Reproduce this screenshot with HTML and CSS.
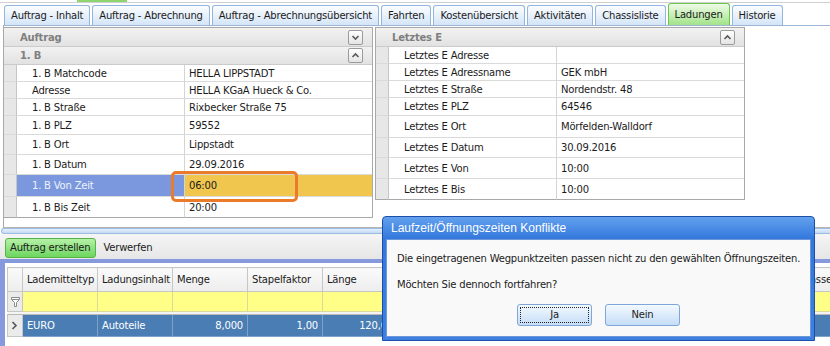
FILE: index.html
```html
<!DOCTYPE html>
<html lang="de">
<head>
    <meta charset="UTF-8">
    <title>Auftrag - Ladungen</title>
    <link rel="stylesheet" href="styles.css">
</head>
<body>
<div class="window">
    <!-- Rest der äußeren Reiterleiste -->
    <div class="top-strip"><span class="top-mark"></span></div>

    <!-- Reiter -->
    <div class="tabs">
        <div class="tab">Auftrag - Inhalt</div>
        <div class="tab">Auftrag - Abrechnung</div>
        <div class="tab">Auftrag - Abrechnungsübersicht</div>
        <div class="tab">Fahrten</div>
        <div class="tab">Kostenübersicht</div>
        <div class="tab">Aktivitäten</div>
        <div class="tab">Chassisliste</div>
        <div class="tab active">Ladungen</div>
        <div class="tab">Historie</div>
    </div>

    <div class="tab-page">
        <!-- Auftrag / 1. B -->
        <div class="panel panel-left">
            <div class="group-head">
                <span>Auftrag</span>
                <span class="fold-btn">
                    <svg width="9" height="9" viewBox="0 0 9 9"><polyline points="1.5,3 4.5,6 7.5,3" fill="none" stroke="#5a5a5a" stroke-width="1.6"/></svg>
                </span>
            </div>
            <div class="group-head sub">
                <span>1. B</span>
                <span class="fold-btn">
                    <svg width="9" height="9" viewBox="0 0 9 9"><polyline points="1.5,6 4.5,3 7.5,6" fill="none" stroke="#5a5a5a" stroke-width="1.6"/></svg>
                </span>
            </div>
            <div class="props props-left">
                <div class="gutter"></div><div class="label">1. B Matchcode</div><div class="value">HELLA LIPPSTADT</div>
                <div class="gutter"></div><div class="label">Adresse</div><div class="value">HELLA KGaA Hueck &amp; Co.</div>
                <div class="gutter"></div><div class="label">1. B Straße</div><div class="value">Rixbecker Straße 75</div>
                <div class="gutter"></div><div class="label">1. B PLZ</div><div class="value">59552</div>
                <div class="gutter"></div><div class="label">1. B Ort</div><div class="value">Lippstadt</div>
                <div class="gutter"></div><div class="label">1. B Datum</div><div class="value">29.09.2016</div>
                <div class="gutter"></div><div class="label sel">1. B Von Zeit</div><div class="value sel">06:00</div>
                <div class="gutter"></div><div class="label">1. B Bis Zeit</div><div class="value">20:00</div>
            </div>
        </div>

        <!-- Letztes E -->
        <div class="panel panel-right">
            <div class="group-head">
                <span>Letztes E</span>
                <span class="fold-btn">
                    <svg width="9" height="9" viewBox="0 0 9 9"><polyline points="1.5,6 4.5,3 7.5,6" fill="none" stroke="#5a5a5a" stroke-width="1.6"/></svg>
                </span>
            </div>
            <div class="props props-right">
                <div class="gutter"></div><div class="label">Letztes E Adresse</div><div class="value"></div>
                <div class="gutter"></div><div class="label">Letztes E Adressname</div><div class="value">GEK mbH</div>
                <div class="gutter"></div><div class="label">Letztes E Straße</div><div class="value">Nordendstr. 48</div>
                <div class="gutter"></div><div class="label">Letztes E PLZ</div><div class="value">64546</div>
                <div class="gutter"></div><div class="label">Letztes E Ort</div><div class="value">Mörfelden-Walldorf</div>
                <div class="gutter"></div><div class="label">Letztes E Datum</div><div class="value">30.09.2016</div>
                <div class="gutter"></div><div class="label">Letztes E Von</div><div class="value">10:00</div>
                <div class="gutter"></div><div class="label">Letztes E Bis</div><div class="value">10:00</div>
            </div>
        </div>
    </div>

    <div class="splitter"></div>

    <div class="toolbar">
        <span class="btn-green">Auftrag erstellen</span>
        <span class="tool-link">Verwerfen</span>
    </div>

    <!-- Ladungen -->
    <div class="grid-frame">
        <table class="data-grid">
            <colgroup>
                <col class="c-sel">
                <col class="c-std"><col class="c-std"><col class="c-std"><col class="c-std">
                <col class="c-std"><col class="c-std"><col class="c-std"><col class="c-std">
                <col class="c-std"><col class="c-std"><col class="c-std">
            </colgroup>
            <thead>
                <tr class="head-row">
                    <th></th>
                    <th>Lademitteltyp</th>
                    <th>Ladungsinhalt</th>
                    <th>Menge</th>
                    <th>Stapelfaktor</th>
                    <th>Länge</th>
                    <th></th>
                    <th></th>
                    <th></th>
                    <th></th>
                    <th></th>
                    <th>Lademasse</th>
                </tr>
            </thead>
            <tbody>
                <tr class="filter-row">
                    <td class="sel-cell">
                        <svg width="9" height="10" viewBox="0 0 9 10"><path d="M0.5,0.5 H8.5 V2.5 L5.5,5.5 V9.5 H3.5 V5.5 L0.5,2.5 Z" fill="#fff" stroke="#8a8a8a"/><line x1="1" y1="2.5" x2="8" y2="2.5" stroke="#8a8a8a"/></svg>
                    </td>
                    <td></td><td></td><td></td><td></td><td></td><td></td><td></td><td></td><td></td><td></td><td></td>
                </tr>
                <tr class="gap-row"><td></td><td></td><td></td><td></td><td></td><td></td><td></td><td></td><td></td><td></td><td></td><td></td></tr>
                <tr class="data-row">
                    <td class="sel-cell">
                        <svg width="7" height="9" viewBox="0 0 7 9"><polyline points="1.5,1 5,4.5 1.5,8" fill="none" stroke="#555" stroke-width="1.6"/></svg>
                    </td>
                    <td>EURO</td>
                    <td>Autoteile</td>
                    <td class="num">8,000</td>
                    <td class="num">1,00</td>
                    <td class="num">120,00</td>
                    <td></td>
                    <td></td>
                    <td></td>
                    <td></td>
                    <td></td>
                    <td></td>
                </tr>
            </tbody>
        </table>
    </div>

    <!-- Markierung -->
    <div class="highlight"></div>

    <!-- Meldung -->
    <div class="dialog">
        <div class="dialog-title">Laufzeit/Öffnungszeiten Konflikte</div>
        <div class="dialog-body">
            <p>Die eingetragenen Wegpunktzeiten passen nicht zu den gewählten Öffnungszeiten.</p>
            <p class="second">Möchten Sie dennoch fortfahren?</p>
            <div class="dialog-buttons">
                <span class="btn focus">Ja</span>
                <span class="btn">Nein</span>
            </div>
        </div>
    </div>
</div>
</body>
</html>
```

FILE: styles.css
```css
* {
    margin: 0;
    padding: 0;
    box-sizing: border-box;
}

body {
    font-family: "DejaVu Sans", Tahoma, sans-serif;
    font-size: 10px;
    letter-spacing: -0.2px;
    color: #1b1b1b;
    background: #fff;
}

.window {
    position: relative;
    width: 830px;
    height: 346px;
    overflow: hidden;
}

/* oberer Rand */
.top-strip {
    position: relative;
    height: 3px;
    border-bottom: 1px solid #d0d0d0;
}

.top-mark {
    position: absolute;
    left: 77px;
    top: 0;
    width: 50px;
    height: 2px;
    background: #8fd56f;
}

/* Reiter */
.tabs {
    display: flex;
    align-items: flex-end;
    gap: 2px;
    height: 22px;
    padding-left: 4px;
}

.tab {
    height: 20px;
    padding: 0 6px;
    line-height: 19px;
    border: 1px solid #94b5dd;
    border-bottom: none;
    border-radius: 3px 3px 0 0;
    background: linear-gradient(#fbfdff, #d4e5f8);
    white-space: nowrap;
}

.tab.active {
    height: 22px;
    line-height: 21px;
    background: linear-gradient(#effbe8, #a2e389);
    border-color: #6cc64e;
}

/* Registerseite */
.tab-page {
    display: flex;
    align-items: flex-start;
    gap: 2px;
    height: 203px;
    margin-left: 3px;
    padding-top: 1px;
    border-top: 1px solid #9db6d6;
    border-left: 1px solid #a9a9a9;
    border-bottom: 1px solid #b5b5b5;
}

.panel {
    border-top: 1px solid #a8a8a8;
    border-right: 1px solid #a8a8a8;
}

.panel-left {
    width: 369px;
}

.panel-right {
    width: 370px;
    border-left: 1px solid #a8a8a8;
}

.group-head {
    display: flex;
    align-items: center;
    justify-content: space-between;
    height: 19px;
    padding: 0 9px 0 16px;
    border-bottom: 1px solid #cbcbcb;
    background: linear-gradient(#f2f2f2, #e2e2e2);
    color: #7f7f7f;
    font-weight: bold;
}

.group-head.sub {
    height: 18px;
}

.fold-btn {
    display: flex;
    align-items: center;
    justify-content: center;
    width: 15px;
    height: 15px;
    border: 1px solid #9b9b9b;
    border-radius: 2px;
    background: linear-gradient(#ffffff, #e4e4e4);
}

/* Eigenschaftsraster */
.props {
    display: grid;
    grid-template-columns: 13px 168px 1fr;
}

.props-left {
    grid-template-rows: 17px 17px 17px 19px 20px 20px 22px 21px;
}

.props-right {
    grid-template-rows: 17px 17px 17px 18px 22px 20px 21px 21px;
}

.props > div {
    display: flex;
    align-items: center;
    border-bottom: 1px solid #dadada;
    white-space: nowrap;
    overflow: hidden;
}

.props > div:nth-last-child(-n+3) {
    border-bottom-color: #a8a8a8;
}

.gutter {
    background: #e7e7e7;
    border-right: 1px solid #c6c6c6;
}

.label {
    padding-left: 15px;
    border-right: 1px solid #d4d4d4;
}

.value {
    padding-left: 4px;
}

.label.sel {
    background: #7b98df;
    color: #eef2fb;
}

.value.sel {
    background: #f0c64f;
}

.highlight {
    position: absolute;
    left: 171px;
    top: 171px;
    width: 127px;
    height: 31px;
    border: 3px solid #ea7b2b;
    border-radius: 5px;
}

/* Trenner und Werkzeugleiste */
.splitter {
    height: 6px;
    margin-left: 1px;
    border: 1px solid #9dbde4;
    border-right: none;
    border-radius: 3px 0 0 3px;
    background: linear-gradient(#e6f0fc, #c3d9f3);
}

.toolbar {
    display: flex;
    align-items: flex-start;
    gap: 7px;
    height: 25px;
    padding: 4px 0 0 5px;
    background: linear-gradient(#f5f5f5, #e6e6e6);
}

.btn-green {
    height: 20px;
    padding: 0 5px 0 4px;
    line-height: 18px;
    border: 1px solid #56b447;
    border-radius: 3px;
    background: linear-gradient(#b6f1a8, #6dd55e);
}

.tool-link {
    line-height: 20px;
}

/* Ladungsraster */
.grid-frame {
    height: 87px;
    padding: 4px 0 0 2px;
    border-top: 4px solid #8599dc;
    border-left: 5px solid #8599dc;
    background: #fff;
}

.data-grid {
    border-collapse: collapse;
    table-layout: fixed;
    width: 840px;
}

.c-sel {
    width: 15px;
}

.c-std {
    width: 75px;
}

.data-grid th,
.data-grid td {
    padding: 0 4px;
    white-space: nowrap;
    overflow: hidden;
    text-align: left;
    font-weight: normal;
}

.head-row th {
    height: 24px;
    border: 1px solid #c6c6c6;
    background: linear-gradient(#fafafa, #ededed);
}

.filter-row td {
    height: 20px;
    border: 1px solid #dada9a;
    background: #ffff88;
}

.gap-row td {
    height: 3px;
    border-top: 1px solid #b8b8b8;
    border-bottom: 1px solid #b8b8b8;
    background: #f4f4f4;
}

.data-row td {
    height: 22px;
    border: 1px solid #7ea3ca;
    background: #4a7db3;
    color: #fff;
}

.data-grid td.num {
    text-align: right;
}

.data-grid td.sel-cell {
    padding: 0 0 0 3px;
    background: #ebebeb;
    border-color: #c6c6c6;
    line-height: 0;
}

/* Meldungsfenster */
.dialog {
    position: absolute;
    left: 382px;
    top: 216px;
    width: 433px;
    height: 125px;
    padding: 0 3px 3px;
    border: 1px solid #1d4fa8;
    border-radius: 4px 4px 0 0;
    background: linear-gradient(#63a1ee, #3277dc 22px, #3d80e2);
}

.dialog-title {
    height: 22px;
    line-height: 22px;
    padding-left: 5px;
    color: #fff;
    font-family: "Liberation Sans", Arial, sans-serif;
    font-size: 12px;
    letter-spacing: 0;
}

.dialog-body {
    height: 98px;
    padding: 12px 0 0 10px;
    border: 1px solid #6d97d6;
    background: #f9f9f9;
    line-height: 14px;
    white-space: nowrap;
}

.dialog-body .second {
    margin-top: 12px;
}

.dialog-buttons {
    display: flex;
    justify-content: center;
    gap: 13px;
    margin-top: 12px;
    padding-right: 10px;
}

.btn {
    width: 75px;
    height: 22px;
    line-height: 20px;
    text-align: center;
    border: 1px solid #7ea6d8;
    border-radius: 3px;
    background: linear-gradient(#f3f9ff, #c5ddf6);
}

.btn.focus {
    outline: 1px dotted #222;
    outline-offset: -4px;
}
```
